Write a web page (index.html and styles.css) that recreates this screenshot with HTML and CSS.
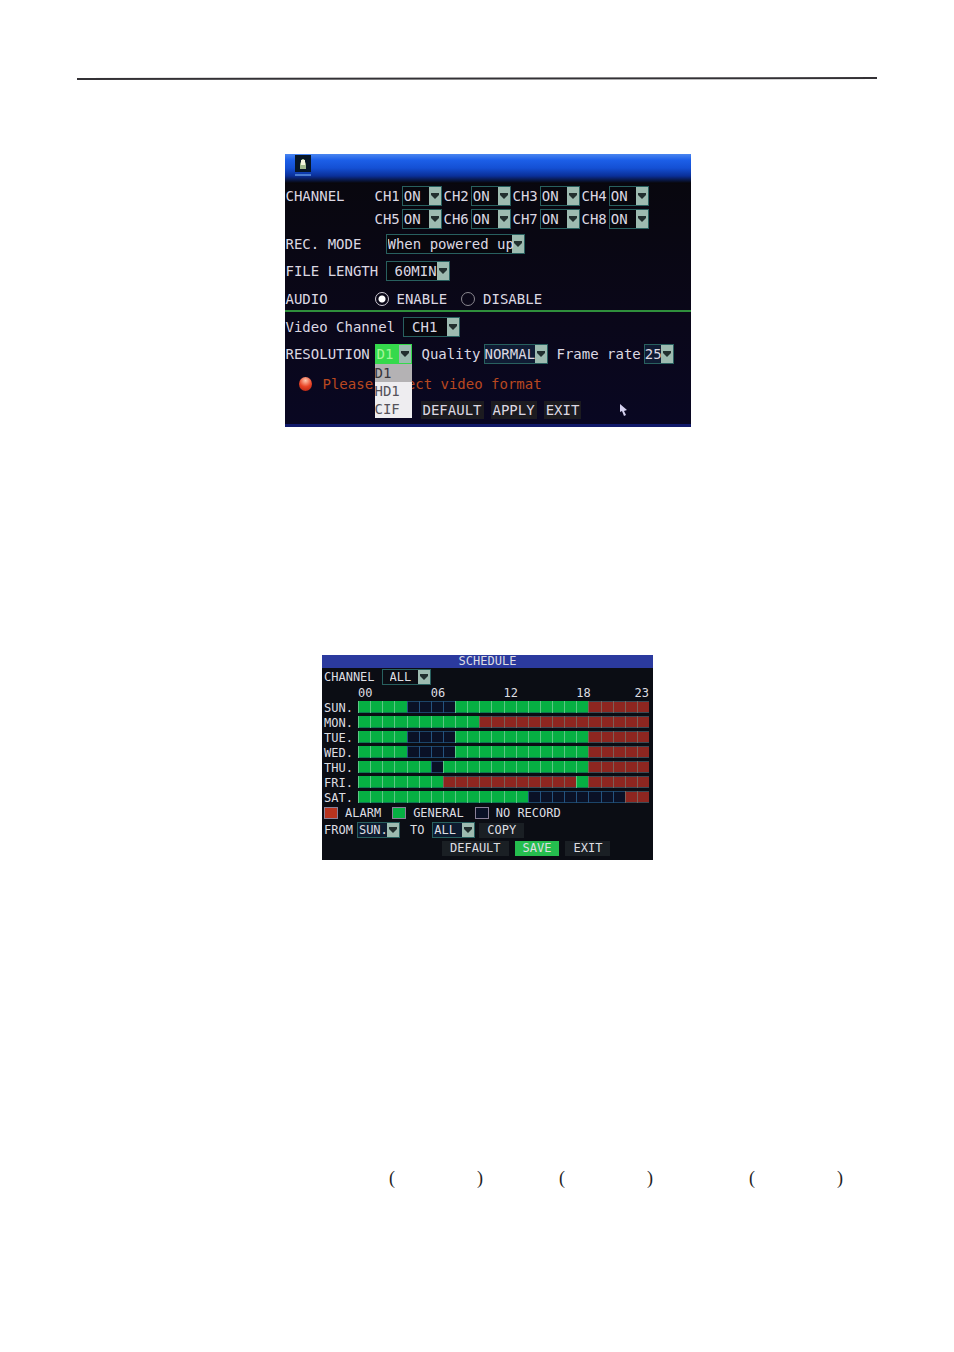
FILE: index.html
```
<!DOCTYPE html>
<html lang="en">
<head>
  <meta charset="UTF-8">
  <title>Record setup and schedule</title>
  <meta name="viewport" content="width=device-width, initial-scale=1">
  <link rel="stylesheet" href="styles.css">
</head>
<body>
<header>
  <svg class="rule" viewBox="0 0 800 4" preserveAspectRatio="none"><path d="M0 3L800 2" stroke="#333135" stroke-width="2"/></svg>
</header>

<main>
  <form class="record">
    <div class="titlebar">
      <svg width="20" height="24" viewBox="0 0 20 24">
        <rect x="2" y="1" width="16" height="17" fill="#071525"/>
        <path d="M7 15v-5l2-5h2l2 5v5z" fill="#9fb98c"/>
        <rect x="8" y="6" width="4" height="5" fill="#f3f5dc"/>
        <path d="M2 21h16" stroke="#4a7cd0" stroke-width="2"/>
      </svg>
    </div>
    <div class="row channels">
      <span class="name">CHANNEL</span>
      <label class="ch">CH1<select><option>ON</option><option>OFF</option></select></label>
      <label class="ch">CH2<select><option>ON</option><option>OFF</option></select></label>
      <label class="ch">CH3<select><option>ON</option><option>OFF</option></select></label>
      <label class="ch">CH4<select><option>ON</option><option>OFF</option></select></label>
    </div>
    <div class="row channels">
      <span class="name"></span>
      <label class="ch">CH5<select><option>ON</option><option>OFF</option></select></label>
      <label class="ch">CH6<select><option>ON</option><option>OFF</option></select></label>
      <label class="ch">CH7<select><option>ON</option><option>OFF</option></select></label>
      <label class="ch">CH8<select><option>ON</option><option>OFF</option></select></label>
    </div>
    <div class="row mode">
      <label class="name wide" for="mode">REC. MODE</label>
      <select id="mode" class="w-mode"><option>When powered up</option></select>
    </div>
    <div class="row">
      <label class="name wide" for="length">FILE LENGTH</label>
      <select id="length" class="w-length"><option>60MIN</option></select>
    </div>
    <div class="row audio">
      <span class="name">AUDIO</span>
      <label><input type="radio" name="audio" checked>ENABLE</label>
      <label><input type="radio" name="audio">DISABLE</label>
    </div>
    <div class="row video">
      <label for="video">Video Channel</label>
      <select id="video" class="w-video"><option>CH1</option></select>
    </div>
    <div class="row resolution">
      <label class="name" for="res">RESOLUTION</label>
      <div class="dropdown">
        <select id="res" class="open"><option>D1</option><option>HD1</option><option>CIF</option></select>
        <ul class="menu">
          <li class="active">D1</li>
          <li>HD1</li>
          <li>CIF</li>
        </ul>
      </div>
      <label for="quality">Quality</label>
      <select id="quality" class="w-quality"><option>NORMAL</option></select>
      <label for="rate">Frame rate</label>
      <select id="rate" class="w-rate"><option>25</option></select>
    </div>
    <div class="row message"><i class="dot"></i>Please select video format</div>
    <div class="actions">
      <button type="button">DEFAULT</button>
      <button type="button">APPLY</button>
      <button type="button">EXIT</button>
      <svg class="cursor" width="8" height="12" viewBox="0 0 8 12"><path d="M0 0l7 6-3 1 2 4-2 1-2-5-2 1z" fill="#d4d0ee"/></svg>
    </div>
  </form>

  <form class="schedule">
    <h2>SCHEDULE</h2>
    <div class="line top">
      <label for="sch">CHANNEL</label>
      <select id="sch" class="w-all"><option>ALL</option></select>
    </div>
    <table>
      <colgroup><col class="day"><col span="24"></colgroup>
      <thead>
        <tr><td></td><th colspan="6">00</th><th colspan="6">06</th><th colspan="6">12</th><th colspan="4">18</th><th colspan="2" class="last">23</th></tr>
      </thead>
      <tbody id="days"></tbody>
    </table>
    <div class="line legend">
      <span><i class="alarm"></i>ALARM</span>
      <span><i class="general"></i>GENERAL</span>
      <span><i class="none"></i>NO RECORD</span>
    </div>
    <div class="line copy">
      <label for="from">FROM</label>
      <select id="from"><option>SUN.</option></select>
      <label class="to" for="to">TO</label>
      <select id="to"><option>ALL</option></select>
      <button type="button">COPY</button>
    </div>
    <div class="line buttons">
      <button type="button">DEFAULT</button>
      <button type="button" class="save">SAVE</button>
      <button type="button">EXIT</button>
    </div>
  </form>

  <p class="brackets">
    <span><b>(</b><b>)</b></span>
    <span><b>(</b><b>)</b></span>
    <span><b>(</b><b>)</b></span>
  </p>
</main>

<script>
  // g = general, a = alarm, n = no record, one letter per hour
  const week = {
    'SUN.': 'ggggnnnngggggggggggaaaaa',
    'MON.': 'ggggggggggaaaaaaaaaaaaaa',
    'TUE.': 'ggggnnnngggggggggggaaaaa',
    'WED.': 'ggggnnnngggggggggggaaaaa',
    'THU.': 'ggggggnggggggggggggaaaaa',
    'FRI.': 'gggggggaaaaaaaaaaagaaaaa',
    'SAT.': 'ggggggggggggggnnnnnnnnaa'
  };
  const names = { g: 'general', a: 'alarm', n: 'none' };

  document.getElementById('days').innerHTML = Object.entries(week).map(([day, hours]) =>
    '<tr><th>' + day + '</th>' + [...hours].map(h => '<td class="' + names[h] + '"></td>').join('') + '</tr>'
  ).join('');
</script>
</body>
</html>
```
FILE: styles.css
```
* {
  box-sizing: border-box;
}
body {
  margin: 0;
  background: #fff;
  font-family: "DejaVu Sans Mono", monospace;
}
header {
  padding: 76px 77px 0;
}
.rule {
  display: block;
  width: 100%;
  height: 4px;
}
main {
  display: flex;
  flex-direction: column;
  align-items: center;
  padding: 74px 77px 160px 98px;
}
select, button {
  appearance: none;
  margin: 0;
  border: 0;
  border-radius: 0;
  font: inherit;
  color: inherit;
}
select {
  width: 40px;
  height: 20px;
  padding: 0 0 0 1px;
  border: 1px solid #28605f;
  background: #07070d url("data:image/svg+xml,%3Csvg xmlns='http://www.w3.org/2000/svg' width='12' height='20'%3E%3Crect width='12' height='20' fill='%239dbbb0'/%3E%3Cpath d='M2 7h8v2l-4 4-4-4z' fill='%2322302f'/%3E%3C/svg%3E") no-repeat right center;
}

/* record setup */
.record {
  width: 100%;
  max-width: 406px;
  background: linear-gradient(#08070c, #0a0719 60%, #090722);
  border-bottom: 3px solid #10196a;
  color: #dcd8e2;
  font-size: 14px;
  line-height: 18px;
  white-space: nowrap;
}
.titlebar {
  height: 30px;
  padding-left: 8px;
  background: linear-gradient(#4a86f0, #1c5fe8 6px, #1450d4 14px, #0a2f98 22px, #08070c 29px);
}
.row {
  display: flex;
  align-items: center;
  height: 26px;
  padding-left: 1px;
}
.name {
  width: 89px;
}
.name.wide {
  width: 100px;
}
.channels {
  height: 23px;
}
.ch {
  display: flex;
  align-items: center;
  gap: 2px;
  width: 69px;
}
.row.mode {
  height: 28px;
}
.w-mode {
  width: 139px;
}
.w-length {
  width: 64px;
  padding-left: 8px;
}
.audio {
  height: 28px;
  padding-top: 4px;
  border-bottom: 2px solid #2f8f3c;
}
.audio label {
  display: flex;
  align-items: center;
  gap: 8px;
  margin-right: 14px;
}
.audio input {
  appearance: none;
  width: 14px;
  height: 14px;
  margin: 0;
  border: 1px solid #8a8890;
  border-radius: 50%;
}
.audio input:checked {
  border-color: #d0ccd6;
  background: radial-gradient(circle, #fff 3px, transparent 4px);
}
.video {
  height: 29px;
  gap: 8px;
}
.w-video {
  width: 57px;
  padding-left: 8px;
}
.dropdown {
  position: relative;
  margin-right: 10px;
}
.dropdown select {
  display: block;
  width: 37px;
  background-color: #35d94c;
  border-color: #35d94c;
  color: #a6f59a;
}
.menu {
  position: absolute;
  top: 20px;
  left: 0;
  z-index: 1;
  width: 37px;
  margin: 0;
  padding: 0;
  list-style: none;
  background: #eeedf0;
  color: #55525a;
}
.menu .active {
  background: #b4b2b4;
  color: #38363c;
}
.w-quality {
  width: 64px;
  margin: 0 9px 0 3px;
  padding: 0;
}
.w-rate {
  width: 30px;
  margin-left: 3px;
  padding: 0;
}
#quality, #rate {
  background-color: #101c34;
}
.message {
  height: 34px;
  padding-left: 14px;
  gap: 11px;
  color: #b9481f;
}
.dot {
  width: 13px;
  height: 14px;
  border-radius: 50%;
  background: radial-gradient(circle at 50% 25%, #ffc9b0, #ea4426 50%, #a81f10);
}
.actions {
  display: flex;
  align-items: center;
  gap: 7px;
  padding: 0 0 5px 136px;
}
.actions button {
  padding: 0 2px;
  background: #1c1b20;
  line-height: 18px;
}
.cursor {
  margin-left: 32px;
}

/* weekly schedule */
.schedule {
  width: 100%;
  max-width: 331px;
  margin-top: 228px;
  padding-bottom: 3px;
  background: #0b0d14;
  color: #dedee2;
  font-size: 12px;
  line-height: 14px;
  white-space: nowrap;
}
.schedule h2 {
  margin: 0;
  background: #2b3a9e;
  font-size: 12px;
  font-weight: normal;
  line-height: 13px;
  text-align: center;
}
.line {
  display: flex;
  align-items: center;
  height: 18px;
  padding-left: 2px;
}
.schedule select {
  width: 43px;
  height: 16px;
  background-color: #0e1c30;
}
.schedule .w-all {
  width: 49px;
  padding-left: 7px;
  background-color: #0b0d14;
}
.top {
  gap: 7px;
}
table {
  width: 325px;
  margin-left: 2px;
  border-spacing: 0;
  table-layout: fixed;
}
col.day {
  width: 34px;
}
th, td {
  height: 15px;
  padding: 0;
  font-weight: normal;
  line-height: 14px;
  text-align: left;
}
thead th, thead td {
  height: 14px;
}
th.last {
  text-align: right;
}
tbody td {
  border: solid #0b0d14;
  border-width: 1px 0 2px;
  background-clip: padding-box;
}
.general {
  background-color: #06b043;
}
.alarm {
  background-color: #8e2620;
}
.none {
  background-color: #0a1126;
}
td.general {
  box-shadow: inset 1px 0 #5cc884, inset 0 -1px #0c7a50;
}
td.alarm {
  box-shadow: inset 1px 0 #7c6058, inset 0 1px #3c4a54, inset 0 -1px #3c4a54;
}
td.none {
  box-shadow: inset 1px 0 #24527e, inset 0 1px #1c4468, inset 0 -1px #1c4468;
}
.legend {
  height: 16px;
}
.legend span {
  display: flex;
  align-items: center;
  gap: 7px;
  margin-right: 11px;
}
.legend i {
  width: 14px;
  height: 12px;
  border: 1px solid #8a8098;
}
.legend .alarm {
  background-color: #b8341f;
}
.copy {
  gap: 4px;
}
.copy .to {
  margin: 0 4px 0 6px;
}
.schedule button {
  height: 15px;
  padding: 0 8px;
  background: #1a1f24;
  line-height: 14px;
}
.buttons {
  gap: 6px;
  padding-left: 120px;
}
.schedule .save {
  background: #25bd4e;
}

.brackets {
  display: flex;
  align-self: flex-end;
  margin: 308px 34px 0 0;
  color: #222;
  font-family: "Liberation Serif", serif;
  font-size: 18px;
  line-height: 20px;
}
.brackets span {
  display: flex;
  justify-content: space-between;
  width: 94px;
}
.brackets span + span {
  margin-left: 76px;
}
.brackets span:last-child {
  margin-left: 96px;
}
.brackets b {
  font-weight: normal;
}
```
